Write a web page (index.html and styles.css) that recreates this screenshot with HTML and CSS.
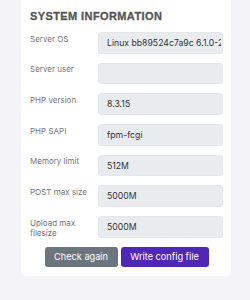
FILE: index.html
```html
<!DOCTYPE html>
<html lang="en">
<head>
    <meta charset="UTF-8">
    <meta name="viewport" content="width=device-width, initial-scale=1.0">
    <title>System information</title>
    <link rel="stylesheet" href="styles.css">
</head>
<body>
    <!-- System info card -->
    <div class="card">
        <h2>System information</h2>

        <div class="row">
            <label for="os">Server OS</label>
            <input type="text" id="os" value="Linux bb89524c7a9c 6.1.0-28-amd64" readonly>
        </div>
        <div class="row">
            <label for="user">Server user</label>
            <input type="text" id="user" value="" readonly>
        </div>
        <div class="row">
            <label for="php">PHP version</label>
            <input type="text" id="php" value="8.3.15" readonly>
        </div>
        <div class="row">
            <label for="sapi">PHP SAPI</label>
            <input type="text" id="sapi" value="fpm-fcgi" readonly>
        </div>
        <div class="row">
            <label for="mem">Memory limit</label>
            <input type="text" id="mem" value="512M" readonly>
        </div>
        <div class="row">
            <label for="post">POST max size</label>
            <input type="text" id="post" value="5000M" readonly>
        </div>
        <div class="row">
            <label for="upload">Upload max filesize</label>
            <input type="text" id="upload" value="5000M" readonly>
        </div>

        <div class="actions">
            <button type="button" class="btn btn-secondary">Check again</button>
            <button type="button" class="btn btn-primary">Write config file</button>
        </div>
    </div>
</body>
</html>
```

FILE: styles.css
```css
/* General Styles */
body {
    margin: 0;
    padding: 0 19px 18px 21px;
    background: #f4f4f8;
    font-family: Inter, "Noto Sans", sans-serif;
    color: #333;
}

.card {
    background: #fff;
    border-radius: 0 0 5px 5px;
    padding: 10px 8px 9px 9px;
}

h2 {
    margin: 0 0 10px;
    font-family: "Liberation Sans", Arial, sans-serif;
    font-size: 11px;
    font-weight: bold;
    letter-spacing: 0.4px;
    text-transform: uppercase;
    color: #555;
    -webkit-text-stroke: 0.3px #555;
}

/* Label + value rows */
.row {
    display: flex;
    align-items: flex-start;
    margin-bottom: 9px;
}

.row label {
    width: 68px;
    flex-shrink: 0;
    padding: 1.5px 4px 0 0;
    box-sizing: border-box;
    font-size: 8px;
    line-height: 10px;
    color: #777;
}

.row input {
    flex: 1;
    min-width: 0;
    height: 21.7px;
    box-sizing: border-box;
    margin: 0;
    padding: 0 1px 0 8px;
    border: 1px solid #e3e6ea;
    border-radius: 3px;
    background: #e9ecef;
    font-family: Inter, "Noto Sans", sans-serif;
    font-size: 8.7px;
    color: #333;
    outline: none;
}

/* Buttons */
.actions {
    display: flex;
    justify-content: center;
    gap: 3px;
    margin-top: 6px;
}

.btn {
    height: 20px;
    padding: 0 6px;
    border: none;
    border-radius: 3px;
    color: #fff;
    font-family: Inter, "Noto Sans", sans-serif;
    font-size: 9.2px;
    cursor: pointer;
}

.btn-secondary {
    width: 73px;
    background: #6c757d;
}

.btn-primary {
    width: 88px;
    background: #4f28b8;
}
```
